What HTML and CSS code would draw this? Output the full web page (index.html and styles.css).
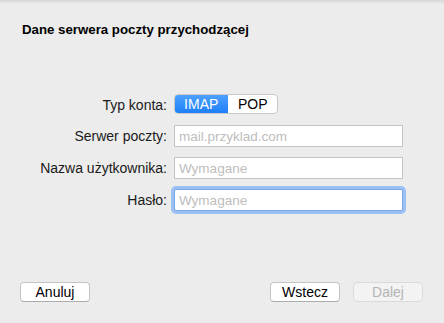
FILE: index.html
```html
<!DOCTYPE html>
<html lang="pl">
<head>
    <meta charset="UTF-8">
    <meta name="viewport" content="width=device-width, initial-scale=1.0">
    <title>Dane serwera poczty przychodzącej</title>
    <link rel="stylesheet" href="styles.css">
</head>
<body>
    <div class="sheet">
        <h1 class="title">Dane serwera poczty przychodzącej</h1>

        <div class="form">
            <label class="label">Typ konta:</label>
            <div class="segmented">
                <span class="segment active">IMAP</span>
                <span class="segment">POP</span>
            </div>

            <label class="label" for="server">Serwer poczty:</label>
            <input type="text" class="field" id="server" placeholder="mail.przyklad.com">

            <label class="label" for="user">Nazwa użytkownika:</label>
            <input type="text" class="field" id="user" placeholder="Wymagane">

            <label class="label" for="pass">Hasło:</label>
            <input type="password" class="field focused" id="pass" placeholder="Wymagane">
        </div>

        <div class="footer">
            <button class="btn">Anuluj</button>
            <div class="footer-right">
                <button class="btn">Wstecz</button>
                <button class="btn" disabled>Dalej</button>
            </div>
        </div>
    </div>
</body>
</html>
```

FILE: styles.css
```css
* {
    box-sizing: border-box;
}
html, body {
    margin: 0;
    height: 100%;
}
body {
    background: #ececec linear-gradient(#d6d6d6, #ececec 4px) no-repeat;
    font-family: "Liberation Sans", Arial, sans-serif;
    font-size: 14px;
    color: #000;
}
.sheet {
    display: flex;
    flex-direction: column;
    height: 100%;
    padding: 22px 21px 21px 20px;
}
.title {
    margin: 0 0 0 2px;
    font-size: 13.25px;
    font-weight: bold;
    line-height: 16px;
}
.form {
    display: grid;
    grid-template-columns: 147px 229px;
    column-gap: 7px;
    row-gap: 10px;
    align-items: center;
    margin-top: 56px;
}
.label {
    text-align: right;
    white-space: nowrap;
    color: #1a1a1a;
}
.segmented {
    display: flex;
    width: 104px;
    height: 20px;
    margin-bottom: 1px;
    border: 1px solid #c9c9c9;
    border-radius: 4px;
    background: #fff;
    overflow: hidden;
}
.segment {
    display: flex;
    align-items: center;
    justify-content: center;
    width: 49px;
    font-size: 14px;
}
.segment.active {
    width: 55px;
    margin: -1px 0 -1px -1px;
    background: linear-gradient(#4fa3ff, #1b7df6);
    color: #fff;
    border-radius: 4px 0 0 4px;
}
.field {
    width: 229px;
    height: 22px;
    margin: 0;
    padding: 0 4px;
    border: 1px solid #c3c3c3;
    background: #fff;
    font-family: inherit;
    font-size: 13.5px;
    outline: none;
}
.field::placeholder {
    color: #bdbdbd;
}
.field.focused {
    border-color: #79a6e8;
    border-radius: 2px;
    box-shadow: 0 0 0 3px #9dc0f2;
}
.footer {
    display: flex;
    justify-content: space-between;
    margin-top: auto;
}
.footer-right {
    display: flex;
    gap: 13px;
}
.btn {
    width: 70px;
    height: 20px;
    padding: 0;
    border: 1px solid #c4c4c4;
    border-bottom-color: #acacac;
    border-radius: 4px;
    background: #fff;
    font-family: inherit;
    font-size: 14px;
    color: #000;
}
.btn:disabled {
    background: #f3f3f3;
    border-color: #d9d9d9;
    color: #b5b5b5;
}
```
